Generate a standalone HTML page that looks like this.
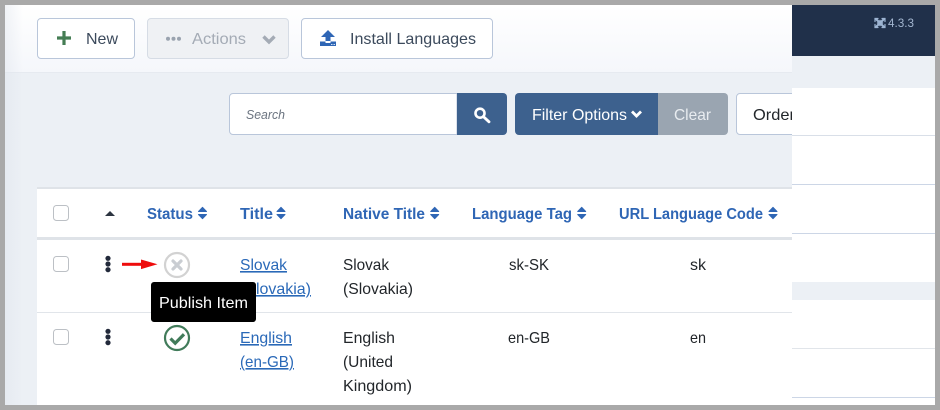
<!DOCTYPE html>
<html><head><meta charset="utf-8"><style>
html,body{margin:0;padding:0;width:940px;height:410px;overflow:hidden;background:#fff}
svg{display:block}
text{font-family:"Liberation Sans",sans-serif;font-size:16px}
.b{font-weight:700;fill:#2f66b5}
.d{fill:#22262a}
.l{fill:#2a69b8;text-decoration:underline}
.g{fill:#3c4a5c}
</style></head><body>
<svg width="940" height="410" viewBox="0 0 940 410" xmlns="http://www.w3.org/2000/svg">
<defs>
<linearGradient id="tb" x1="0" y1="0" x2="0" y2="1"><stop offset="0" stop-color="#fff"/><stop offset="1" stop-color="#f5f7fb"/></linearGradient>
<linearGradient id="sd" x1="0" y1="0" x2="1" y2="0"><stop offset="0" stop-color="#dfe4ec"/><stop offset="1" stop-color="#dfe4ec" stop-opacity="0"/></linearGradient>
<clipPath id="c1"><rect x="0" y="0" width="792" height="410"/></clipPath>
</defs>
<rect width="940" height="410" fill="#a9a9a9"/>
<rect x="5" y="5" width="930" height="400" fill="#ecf0f5"/>
<rect x="5" y="5" width="787" height="67" fill="url(#tb)"/>
<rect x="5" y="72" width="787" height="1" fill="#e6eaf0"/>
<rect x="5" y="5" width="18" height="400" fill="url(#sd)" opacity=".45"/>

<!-- toolbar -->
<rect x="37.500" y="18.500" width="97" height="40" rx="3.500" fill="#fff" stroke="#b9c6da"/>
<path d="M64 31v14M57 38h14" stroke="#457d54" stroke-width="3.200" fill="none"/>
<text x="86" y="44" class="g" textLength="32" lengthAdjust="spacingAndGlyphs">New</text>
<rect x="147.500" y="18.500" width="141" height="40" rx="3.500" fill="#eff1f4" stroke="#d6dce5"/>
<circle cx="168" cy="38.800" r="2" fill="#9aa3af"/><circle cx="173.500" cy="38.800" r="2" fill="#9aa3af"/><circle cx="179" cy="38.800" r="2" fill="#9aa3af"/>
<text x="192" y="44" fill="#a4abb5" textLength="54" lengthAdjust="spacingAndGlyphs">Actions</text>
<path d="M263.500 36.500l5.500 5.500 5.500-5.500" stroke="#a4abb5" stroke-width="3.400" fill="none"/>
<rect x="301.500" y="18.500" width="191" height="40" rx="3.500" fill="#fff" stroke="#b9c6da"/>
<path d="M328 30l7 7h-4.500v6h-5v-6H321z" fill="#2f66b5"/>
<path d="M320 41.500h16v4.500h-16z" fill="#2f66b5"/>
<rect x="325.500" y="41" width="5" height="2" fill="#fff"/>
<rect x="331" y="44" width="1.500" height="1" fill="#cfe0f5"/><rect x="333.500" y="44" width="1.500" height="1" fill="#cfe0f5"/>
<text x="350" y="44" class="g" textLength="126" lengthAdjust="spacingAndGlyphs">Install Languages</text>

<!-- filter bar -->
<path d="M233 93.500H457V134.500H233a3.500 3.500 0 0 1-3.500-3.500V97a3.500 3.500 0 0 1 3.500-3.500z" fill="#fff" stroke="#b9c6da"/>
<text x="246" y="119" style="font-size:12.500px;font-style:italic" fill="#6b7480" textLength="39" lengthAdjust="spacingAndGlyphs">Search</text>
<path d="M457 93h46a4 4 0 0 1 4 4v34a4 4 0 0 1-4 4h-46z" fill="#3d618e"/>
<circle cx="480" cy="113.200" r="4.500" fill="none" stroke="#fff" stroke-width="2.600"/>
<path d="M484 117.200l5 4.600" stroke="#fff" stroke-width="2.800" stroke-linecap="round"/>
<path d="M519 93h139v42H519a4 4 0 0 1-4-4V97a4 4 0 0 1 4-4z" fill="#3d618e"/>
<text x="532" y="120" fill="#fff" textLength="95" lengthAdjust="spacingAndGlyphs">Filter Options</text>
<path d="M632 111.500l4.500 4.500 4.500-4.500" stroke="#fff" stroke-width="2.800" fill="none"/>
<path d="M658 93h66a4 4 0 0 1 4 4v34a4 4 0 0 1-4 4h-66z" fill="#9aa5b1"/>
<text x="674" y="120" fill="#e8ecf0" textLength="37" lengthAdjust="spacingAndGlyphs">Clear</text>
<g clip-path="url(#c1)">
<rect x="736.500" y="93.500" width="100" height="41" rx="3.500" fill="#fff" stroke="#b9c6da"/>
<text x="753" y="120" class="d" textLength="42" lengthAdjust="spacingAndGlyphs">Order</text>
</g>

<!-- table -->
<rect x="37" y="187" width="755" height="218" fill="#fff"/>
<rect x="37" y="187" width="755" height="2" fill="#dfe3e8"/>
<rect x="37" y="237" width="755" height="3" fill="#dfe3e8"/>
<rect x="37" y="312" width="755" height="1" fill="#e1e5ea"/>

<rect x="53.500" y="205.500" width="15" height="15" rx="3" fill="#fff" stroke="#bcc0c5"/>
<rect x="53.500" y="256.500" width="15" height="15" rx="3" fill="#fff" stroke="#bcc0c5"/>
<rect x="53.500" y="329.500" width="15" height="15" rx="3" fill="#fff" stroke="#bcc0c5"/>
<path d="M105 216l5-5 5 5z" fill="#2c3440"/>

<text x="147" y="219" class="b" textLength="46" lengthAdjust="spacingAndGlyphs">Status</text>
<text x="240" y="219" class="b" textLength="33" lengthAdjust="spacingAndGlyphs">Title</text>
<text x="343" y="219" class="b" textLength="82" lengthAdjust="spacingAndGlyphs">Native Title</text>
<text x="472" y="219" class="b" textLength="100" lengthAdjust="spacingAndGlyphs">Language Tag</text>
<text x="619" y="219" class="b" textLength="144" lengthAdjust="spacingAndGlyphs">URL Language Code</text>
<g fill="#2f66b5" stroke="#2f66b5" stroke-width="1" stroke-linejoin="round">
<path d="M198.500 211.500l4-4.200 4 4.200zM198.500 214.500h8l-4 4.200z"/>
<path d="M277 211.500l4-4.200 4 4.200zM277 214.500h8l-4 4.200z"/>
<path d="M430.700 211.500l4-4.200 4 4.200zM430.700 214.500h8l-4 4.200z"/>
<path d="M577.700 211.500l4-4.200 4 4.200zM577.700 214.500h8l-4 4.200z"/>
<path d="M769 211.500l4-4.200 4 4.200zM769 214.500h8l-4 4.200z"/>
</g>

<!-- row 1 -->
<g fill="#22293a"><circle cx="108" cy="258.300" r="2.600"/><circle cx="108" cy="264" r="2.600"/><circle cx="108" cy="269.700" r="2.600"/></g>
<rect x="122" y="262.800" width="20" height="3" fill="#ee0c0c"/>
<path d="M141 259.500l16.500 4.800-16.500 4.800z" fill="#ee0c0c"/>
<circle cx="177" cy="265" r="12" fill="#fff" stroke="#d2d2d2" stroke-width="2.200"/>
<path d="M173 261l8 8M181 261l-8 8" stroke="#c9cdd2" stroke-width="3.200" stroke-linecap="round"/>
<text x="240" y="270" class="l" textLength="47" lengthAdjust="spacingAndGlyphs">Slovak</text>
<text x="240" y="294" class="l" textLength="71" lengthAdjust="spacingAndGlyphs">(Slovakia)</text>
<text x="343" y="270" class="d" textLength="46" lengthAdjust="spacingAndGlyphs">Slovak</text>
<text x="343" y="294" class="d" textLength="70" lengthAdjust="spacingAndGlyphs">(Slovakia)</text>
<text x="509" y="270" class="d" textLength="40" lengthAdjust="spacingAndGlyphs">sk-SK</text>
<text x="690" y="270" class="d" textLength="16" lengthAdjust="spacingAndGlyphs">sk</text>

<!-- row 2 -->
<g fill="#22293a"><circle cx="108" cy="331.300" r="2.600"/><circle cx="108" cy="337" r="2.600"/><circle cx="108" cy="342.700" r="2.600"/></g>
<circle cx="177" cy="338" r="12" fill="#fff" stroke="#417b5a" stroke-width="2.200"/>
<path d="M170.500 338.500l4.700 4.700 8.800-9" stroke="#417b5a" stroke-width="3.200" fill="none"/>
<text x="240" y="343" class="l" textLength="52" lengthAdjust="spacingAndGlyphs">English</text>
<text x="240" y="367" class="l" textLength="54" lengthAdjust="spacingAndGlyphs">(en-GB)</text>
<text x="343" y="343" class="d" textLength="52" lengthAdjust="spacingAndGlyphs">English</text>
<text x="343" y="367" class="d" textLength="50" lengthAdjust="spacingAndGlyphs">(United</text>
<text x="343" y="391" class="d" textLength="69" lengthAdjust="spacingAndGlyphs">Kingdom)</text>
<text x="508" y="343" class="d" textLength="42" lengthAdjust="spacingAndGlyphs">en-GB</text>
<text x="690" y="343" class="d" textLength="16" lengthAdjust="spacingAndGlyphs">en</text>

<!-- tooltip -->
<rect x="151" y="282" width="105" height="40" rx="3" fill="#000"/>
<text x="159" y="308" fill="#fff" textLength="89" lengthAdjust="spacingAndGlyphs">Publish Item</text>

<!-- right panel -->
<rect x="792" y="5" width="143" height="400" fill="#fff"/>
<rect x="792" y="5" width="143" height="51" fill="#20304a"/>
<rect x="792" y="56" width="143" height="32" fill="#ecf0f5"/>
<rect x="792" y="135" width="143" height="1" fill="#d9dfe8"/>
<rect x="792" y="184" width="143" height="1" fill="#ccd6e6"/>
<rect x="792" y="233" width="143" height="1" fill="#ccd6e6"/>
<rect x="792" y="282" width="143" height="18" fill="#ecf0f5"/>
<rect x="792" y="348" width="143" height="1" fill="#e1e5ea"/>
<rect x="792" y="397" width="143" height="1" fill="#ccd6e6"/>
<g fill="none" stroke="#9db4d2" stroke-linecap="round">
<path d="M876 19l8 8M884 19l-8 8" stroke-width="2.200"/>
<path d="M875 21.500V18.500H878M882 18.500H885V21.500M885 24.500V27.500H882M878 27.500H875V24.500M877.500 23L880 20.500 882.500 23 880 25.500z" stroke-width="1.200"/>
</g>
<text x="888" y="27" style="font-size:12px" fill="#a3b6d0" textLength="26" lengthAdjust="spacingAndGlyphs">4.3.3</text>
</svg>
</body></html>
